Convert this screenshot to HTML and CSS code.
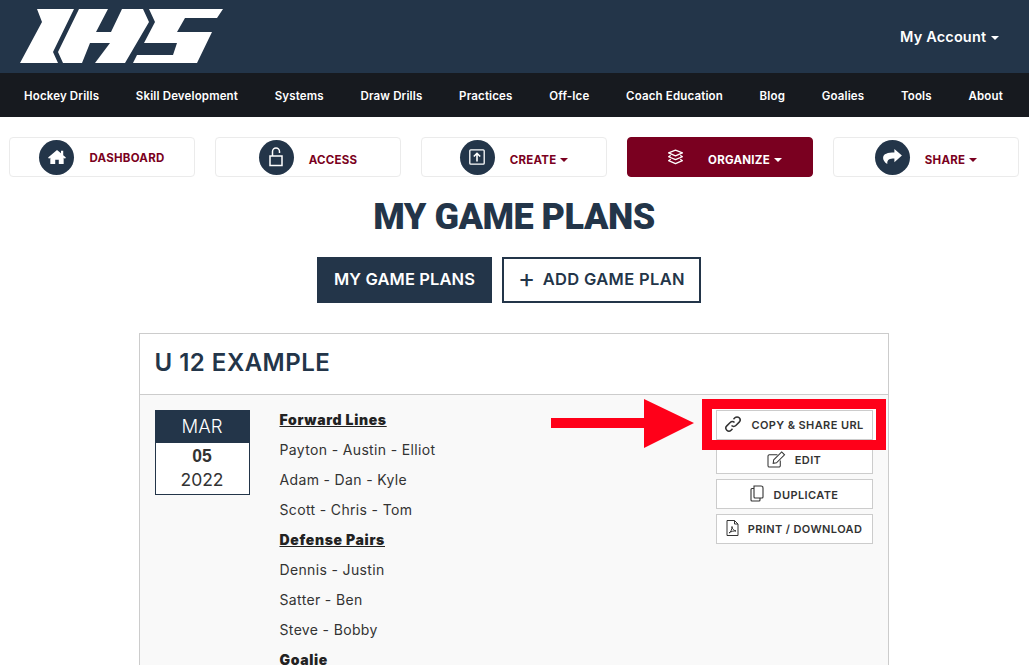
FILE: index.html
```html
<!DOCTYPE html>
<html lang="en">
<head>
<meta charset="utf-8">
<title>My Game Plans</title>
<link rel="stylesheet" href="styles.css">
</head>
<body>
<header class="top">
  <svg class="logo" viewBox="20 9 203 54" aria-label="IHS logo">
    <path fill="#fff" d="M37 9H74L53 52 58 63H20L42 22Z"/>
    <path fill="#fff" d="M79 9H108L96 32H111L122 9H143L149 22 125 63H95L110 43H90L82 63H63L58 52Z"/>
    <path fill="#fff" d="M149 9H223L217 18H185L177 32H212L197 63H133L137 55H173L177 43H144L155 22Z"/>
  </svg>
  <a class="account">My Account <i class="caret"></i></a>
</header>
<nav class="mainnav">
  <a>Hockey Drills</a><a>Skill Development</a><a>Systems</a><a>Draw Drills</a><a>Practices</a><a>Off-Ice</a><a>Coach Education</a><a>Blog</a><a>Goalies</a><a>Tools</a><a>About</a>
</nav>
<section class="toolbar">
  <a class="tool">
    <span class="disc"><svg viewBox="0 0 20 18" width="18" height="16"><path fill="#fff" d="M10 1 0 9.500 1 11l1.500-1.200V17h5.500v-5h4v5h5.500V9.800L19 11l1-1.500-3-2.600V2h-2.500v2.800Z"/></svg></span>
    <span class="tool-label up">DASHBOARD</span>
  </a>
  <a class="tool">
    <span class="disc"><svg viewBox="0 0 14 20" width="14" height="20"><path fill="none" stroke="#fff" stroke-width="1.500" d="M3.500 9V4.500a3.500 3.500 0 0 1 7 0V6M1 9h12v9.500H1Z"/></svg></span>
    <span class="tool-label">ACCESS</span>
  </a>
  <a class="tool">
    <span class="disc"><svg viewBox="0 0 16 16" width="16" height="16"><rect x=".8" y=".8" width="14.400" height="14.400" rx="1" fill="none" stroke="#fff" stroke-width="1.300"/><path fill="none" stroke="#fff" stroke-width="1.600" d="M8 12.500V4.500M4.800 7.500 8 4.300l3.200 3.200"/></svg></span>
    <span class="tool-label">CREATE <i class="caret"></i></span>
  </a>
  <a class="tool active">
    <span class="disc"><svg viewBox="0 0 16 16" width="17" height="17"><path fill="none" stroke="#fff" stroke-width="1.200" stroke-linejoin="round" d="M8 1 14.500 3.700 8 6.400 1.500 3.700ZM3.500 6 1.500 7.300 8 10l6.500-2.700-2-1.300M3.500 9.600 1.500 11 8 13.800 14.500 11l-2-1.400"/></svg></span>
    <span class="tool-label">ORGANIZE <i class="caret"></i></span>
  </a>
  <a class="tool">
    <span class="disc"><svg viewBox="0 0 20 17" width="19" height="16"><path fill="#fff" d="M12 0l8 7-8 7V10C7 10 4 11 4.500 16 1.500 14 0 11.500 0 9.500 0 5 5 3.700 12 3.700Z"/></svg></span>
    <span class="tool-label">SHARE <i class="caret"></i></span>
  </a>
</section>
<main class="content">
  <h1>MY GAME PLANS</h1>
  <div class="tabs">
    <a class="tab solid">MY GAME PLANS</a>
    <a class="tab outline"><span class="plus">+</span>ADD GAME PLAN</a>
  </div>
  <article class="card">
    <h2 class="card-head">U 12 EXAMPLE</h2>
    <div class="card-body">
      <div class="date">
        <div class="month">MAR</div>
        <div class="day">05</div>
        <div class="year">2022</div>
      </div>
      <div class="plan">
        <p class="heading"><u>Forward Lines</u></p>
        <p>Payton - Austin - Elliot</p>
        <p>Adam - Dan - Kyle</p>
        <p>Scott - Chris - Tom</p>
        <p class="heading"><u>Defense Pairs</u></p>
        <p>Dennis - Justin</p>
        <p>Satter - Ben</p>
        <p>Steve - Bobby</p>
        <p class="heading">Goalie</p>
      </div>
      <div class="actions">
        <a class="action">
          <svg viewBox="0 0 18 18" width="18" height="18"><g fill="none" stroke="#333" stroke-width="1.500"><path d="M7.500 10.500a3 3 0 0 0 4.300 0l3.400-3.400a3 3 0 0 0-4.300-4.300L9.500 4.200"/><path d="M10.500 7.500a3 3 0 0 0-4.300 0l-3.400 3.400a3 3 0 0 0 4.300 4.300l1.400-1.400"/></g></svg>
          COPY &amp; SHARE URL
        </a>
        <a class="action">
          <svg viewBox="0 0 20 18" width="19" height="17"><g fill="none" stroke="#333" stroke-width="1.100"><path d="M14 10v5.500a1.500 1.500 0 0 1-1.500 1.500h-10A1.500 1.500 0 0 1 1 15.500v-10A1.500 1.500 0 0 1 2.500 4H11"/><path d="M7 9.500 15.500 1l3 3L10 12.500l-3.500.5Z"/></g></svg>
          EDIT
        </a>
        <a class="action">
          <svg viewBox="0 0 15 17" width="15" height="17"><g fill="none" stroke="#333" stroke-width="1.100"><path d="M4 1h7a2 2 0 0 1 2 2v9a1 1 0 0 1-1 1H5a1 1 0 0 1-1-1Z"/><path d="M4 3.500H2a1 1 0 0 0-1 1V15a1 1 0 0 0 1 1h7a1 1 0 0 0 1-1v-2"/></g></svg>
          DUPLICATE
        </a>
        <a class="action">
          <svg viewBox="0 0 13 16" width="13" height="16"><g fill="none" stroke="#333" stroke-width="1"><path d="M1 .500h7.500L12 4v11.500H1Z"/><path d="M8.500.500V4H12"/><path d="M3 13c2-1 3-4 3-6.500 0 2.500 2 4 4 4.500-2.500-.3-5 .5-7 2Z"/></g></svg>
          PRINT / DOWNLOAD
        </a>
        <div class="callout"></div>
        <svg class="arrow" viewBox="0 0 143 49" width="143" height="49"><path fill="#ff0019" d="M0 19H93V0L143 24 93 49V29H0Z"/></svg>
      </div>
    </div>
  </article>
</main>
</body>
</html>
```
FILE: styles.css
```css
* { box-sizing: border-box; }
html, body { height: 100%; overflow: hidden; }
body { margin: 0; background: #fff; font-family: "Inter", "Liberation Sans", sans-serif; color: #333; }
a { color: inherit; text-decoration: none; }
.top { height: 73px; background: #233549; display: flex; align-items: center; justify-content: space-between; padding: 0 30px 0 20px; }
.logo { width: 203px; height: 54px; margin-top: -1px; }
.account { color: #fff; font-size: 14.500px; font-weight: 600; letter-spacing: .15px; }
.caret { display: inline-block; width: 0; height: 0; border: 4px solid transparent; border-top-color: currentColor; border-bottom: 0; vertical-align: middle; margin-left: 1px; }
.mainnav { height: 44px; background: #171a1f; display: flex; align-items: center; justify-content: space-between; padding: 1px 26px 0 24px; color: #fff; font-size: 11.500px; font-weight: 600; letter-spacing: .15px; }
.toolbar { display: flex; gap: 20px; padding: 20px 10px 0 9px; }
.tool { width: 186px; height: 40px; border: 1px solid #ebebeb; border-radius: 4px; display: flex; align-items: center; justify-content: center; gap: 15px; color: #7a0020; font-size: 11.500px; font-weight: 700; letter-spacing: .25px; }
.tool.active { background: #7a0020; border-color: #7a0020; color: #fff; }
.disc { width: 35px; height: 35px; border-radius: 50%; background: #233549; display: flex; align-items: center; justify-content: center; flex: none; }
.tool.active .disc { background: transparent; }
.tool-label { margin-top: 5px; white-space: nowrap; }
.tool-label.up { margin-top: 1px; }
.content { display: flex; flex-direction: column; align-items: center; }
h1 { margin: 22px 0 0 -1px; height: 36px; line-height: 36px; font-family: "Roboto", "Liberation Sans", sans-serif; font-size: 36px; font-weight: 900; color: #233549; letter-spacing: -.5px; }
.tabs { display: flex; gap: 10px; margin-top: 22px; margin-left: -11px; }
.tab { height: 46px; display: flex; align-items: center; justify-content: center; padding-bottom: 2px; font-size: 16.500px; font-weight: 600; letter-spacing: .1px; white-space: nowrap; }
.tab.solid { width: 175px; background: #233549; color: #fff; }
.tab.outline { width: 199px; border: 2px solid #233549; color: #233549; letter-spacing: .35px; }
.plus { font-size: 26px; font-weight: 400; line-height: 1; margin-right: 7px; margin-top: -3px; }
.card { width: 750px; margin-top: 30px; margin-left: -2px; border: 1px solid #ccc; }
.card-head { margin: 0; height: 61px; display: flex; align-items: center; padding: 0 0 3px 15px; font-size: 24px; font-weight: 600; letter-spacing: .5px; color: #233549; background: #fff; border-bottom: 1px solid #ccc; }
.card-body { height: 400px; background: #f9f9f9; display: flex; padding: 15px; }
.date { width: 95px; height: 85px; border: 1px solid #233549; background: #fff; text-align: center; flex: none; }
.month { height: 32px; line-height: 30px; background: #233549; color: #fff; font-size: 18.500px; font-weight: 300; }
.day { font-family: "Liberation Sans", sans-serif; font-weight: 700; font-size: 17.500px; line-height: 24px; margin-top: 1px; color: #333; }
.year { font-size: 17.500px; line-height: 23px; font-weight: 400; color: #333; }
.plan { margin-left: 30px; width: 270px; font-size: 14px; letter-spacing: .35px; }
.plan p { margin: 0; height: 30px; line-height: 20px; }
.plan .heading { font-weight: 900; color: #222; letter-spacing: .65px; }
.actions { position: relative; margin-left: 166px; width: 157px; display: flex; flex-direction: column; }
.action { height: 29.700px; border: 1px solid #ccc; background: #fff; display: flex; align-items: center; justify-content: center; gap: 9px; padding-top: 1px; font-size: 11px; font-weight: 600; letter-spacing: .4px; white-space: nowrap; margin-bottom: 5px; }
.action svg { margin-top: -2px; }
.action:first-child { position: relative; z-index: 1; }
.callout { position: absolute; left: -14px; top: -11px; width: 184px; height: 51px; border: 10px solid #ff0019; background: #fff; }
.arrow { position: absolute; left: -165px; top: -11px; }
```
